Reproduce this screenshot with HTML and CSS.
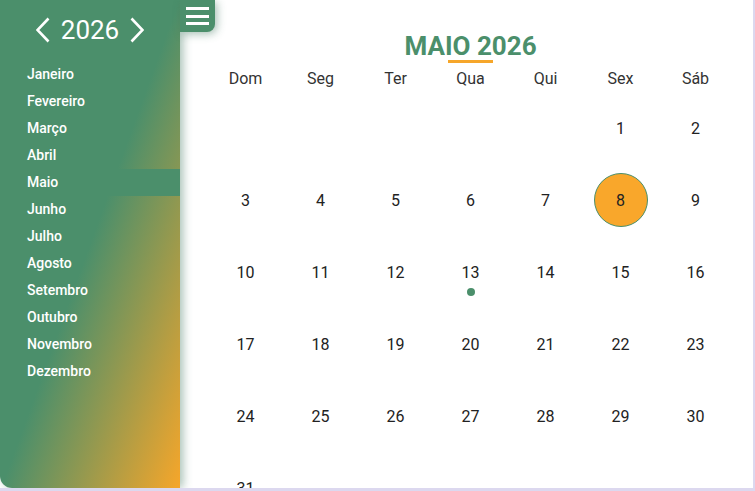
FILE: index.html
```html
<!DOCTYPE html>
<html lang="pt">
<head>
    <meta charset="UTF-8">
    <meta name="viewport" content="width=device-width, initial-scale=1.0">
    <title>Calendário</title>
    <link rel="stylesheet" href="styles.css">
</head>
<body>
    <div class="app">
        <aside class="sidebar">
            <div class="year-nav">
                <button class="year-arrow" aria-label="Ano anterior">
                    <svg width="14" height="26" viewBox="0 0 14 26"><polyline points="12.5,1.5 1.5,13 12.5,24.5" fill="none" stroke="#fff" stroke-width="2.6"/></svg>
                </button>
                <span class="year">2026</span>
                <button class="year-arrow" aria-label="Próximo ano">
                    <svg width="14" height="26" viewBox="0 0 14 26"><polyline points="1.5,1.5 12.5,13 1.5,24.5" fill="none" stroke="#fff" stroke-width="2.6"/></svg>
                </button>
            </div>
            <ul class="months">
                <li>Janeiro</li>
                <li>Fevereiro</li>
                <li>Março</li>
                <li>Abril</li>
                <li class="active">Maio</li>
                <li>Junho</li>
                <li>Julho</li>
                <li>Agosto</li>
                <li>Setembro</li>
                <li>Outubro</li>
                <li>Novembro</li>
                <li>Dezembro</li>
            </ul>
        </aside>

        <button class="menu-toggle" aria-label="Menu">
            <span></span><span></span><span></span>
        </button>

        <main class="calendar">
            <h1 class="month-title">MAIO 2026</h1>
            <div class="title-bar"></div>

            <div class="weekdays">
                <div>Dom</div><div>Seg</div><div>Ter</div><div>Qua</div><div>Qui</div><div>Sex</div><div>Sáb</div>
            </div>

            <div class="days">
                <div></div><div></div><div></div><div></div><div></div>
                <div>1</div><div>2</div>

                <div>3</div><div>4</div><div>5</div><div>6</div><div>7</div>
                <div><span class="today">8</span></div><div>9</div>

                <div>10</div><div>11</div><div>12</div>
                <div class="has-event">13</div>
                <div>14</div><div>15</div><div>16</div>

                <div>17</div><div>18</div><div>19</div><div>20</div><div>21</div><div>22</div><div>23</div>

                <div>24</div><div>25</div><div>26</div><div>27</div><div>28</div><div>29</div><div>30</div>

                <div>31</div>
            </div>
        </main>
    </div>
</body>
</html>
```

FILE: styles.css
```css
body {
    margin: 0;
    background-color: #dcd8ef;
    font-family: Roboto, "Liberation Sans", Arial, sans-serif;
}

.app {
    position: relative;
    display: flex;
    width: 753px;
    height: 488px;
    background-color: #fff;
    overflow: hidden;
}

/* Sidebar */
.sidebar {
    width: 180px;
    flex-shrink: 0;
    padding-top: 10px;
    box-sizing: border-box;
    background: linear-gradient(110deg, #4b8f6b 50%, #f6a62a 100%);
    border-radius: 0 0 0 12px;
    box-shadow: 3px 0 10px rgba(60, 115, 90, 0.45);
    color: #fff;
    z-index: 1;
}

.year-nav {
    height: 40px;
    display: flex;
    justify-content: center;
    align-items: center;
    gap: 11px;
}

.year-arrow {
    background: none;
    border: none;
    padding: 0;
    display: flex;
    cursor: pointer;
}

.year {
    font-size: 26px;
    line-height: 40px;
}

.months {
    list-style: none;
    margin: 11px 0 0;
    padding: 0;
}

.months li {
    height: 27px;
    line-height: 27px;
    padding-left: 27px;
    font-size: 14px;
    font-weight: 500;
    cursor: pointer;
}

.months li.active {
    background-color: #4b8f6b;
}

/* Menu button */
.menu-toggle {
    position: absolute;
    top: 0;
    left: 180px;
    width: 35px;
    height: 32px;
    padding: 7px 6px;
    box-sizing: border-box;
    border: none;
    background-color: #4b8f6b;
    border-radius: 0 0 8px 0;
    box-shadow: 2px 2px 8px rgba(60, 115, 90, 0.45);
    display: flex;
    flex-direction: column;
    justify-content: space-between;
    z-index: 2;
    cursor: pointer;
}

.menu-toggle span {
    display: block;
    height: 3px;
    background-color: #fff;
}

/* Calendar */
.calendar {
    flex: 1;
    padding: 33px 20px 0 28px;
}

.month-title {
    margin: 0;
    text-align: center;
    font-size: 26px;
    line-height: 27px;
    font-weight: 700;
    color: #4b8f6b;
}

.title-bar {
    width: 45px;
    height: 3px;
    margin: 0 auto;
    background-color: #f6a62a;
}

.weekdays,
.days {
    display: grid;
    grid-template-columns: repeat(7, 75px);
}

.weekdays {
    margin-top: 6px;
    margin-bottom: 3px;
}

.weekdays div {
    text-align: center;
    font-size: 16px;
    line-height: 20px;
    color: #333;
}

.days div {
    position: relative;
    height: 72px;
    display: flex;
    justify-content: center;
    align-items: center;
    font-size: 16px;
    color: #222;
}

.today {
    width: 52px;
    height: 52px;
    display: flex;
    justify-content: center;
    align-items: center;
    border-radius: 50%;
    background-color: #f9a72b;
    border: 1px solid #4b8f6b;
}

.has-event::after {
    content: "";
    position: absolute;
    left: 50%;
    top: 50%;
    width: 8px;
    height: 8px;
    margin: 16px 0 0 -4px;
    border-radius: 50%;
    background-color: #4b8f6b;
}
```
